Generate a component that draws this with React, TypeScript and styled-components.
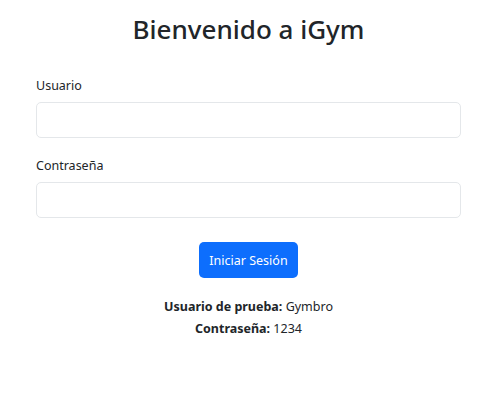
import styled, { createGlobalStyle } from 'styled-components'

const Global = createGlobalStyle`
  body {
    margin: 0;
    background: #fff;
    font-family: "Noto Sans", "Open Sans", sans-serif;
    color: #212529;
  }
`

const Page = styled.main`
  padding: 14px 24px 0 36px;
  width: 425px;
`

const Title = styled.h2`
  margin: 0 0 31px;
  text-align: center;
  font-size: 26px;
  font-weight: 500;
  line-height: 1.2;
`

const Form = styled.form`
  display: flex;
  flex-direction: column;
`

const Field = styled.div`
  display: flex;
  flex-direction: column;
  margin-bottom: 18px;
`

const Label = styled.label`
  font-size: 12.5px;
  line-height: 20px;
  margin-bottom: 6px;
`

const Input = styled.input`
  box-sizing: border-box;
  height: 36px;
  width: 100%;
  border: 1px solid #e4e7ea;
  border-radius: 5px;
  background: #fff;
  outline: none;
`

const Submit = styled.button`
  align-self: center;
  margin-top: 6px;
  height: 36px;
  padding: 0 10px;
  border: none;
  border-radius: 5px;
  background: #0d6efd;
  color: #fff;
  font-family: inherit;
  font-size: 12.5px;
`

const Hints = styled.div`
  margin-top: 18px;
  text-align: center;
  font-size: 12.5px;
  line-height: 22px;
`

export default function App() {
  return (
    <>
      <Global />
      <Page>
        <Title>Bienvenido a iGym</Title>
        <Form onSubmit={(e) => e.preventDefault()}>
          <Field>
            <Label htmlFor="user">Usuario</Label>
            <Input id="user" type="text" />
          </Field>
          <Field>
            <Label htmlFor="pass">Contraseña</Label>
            <Input id="pass" type="password" />
          </Field>
          <Submit type="submit">Iniciar Sesión</Submit>
        </Form>
        <Hints>
          <div><b>Usuario de prueba:</b> Gymbro</div>
          <div><b>Contraseña:</b> 1234</div>
        </Hints>
      </Page>
    </>
  )
}
